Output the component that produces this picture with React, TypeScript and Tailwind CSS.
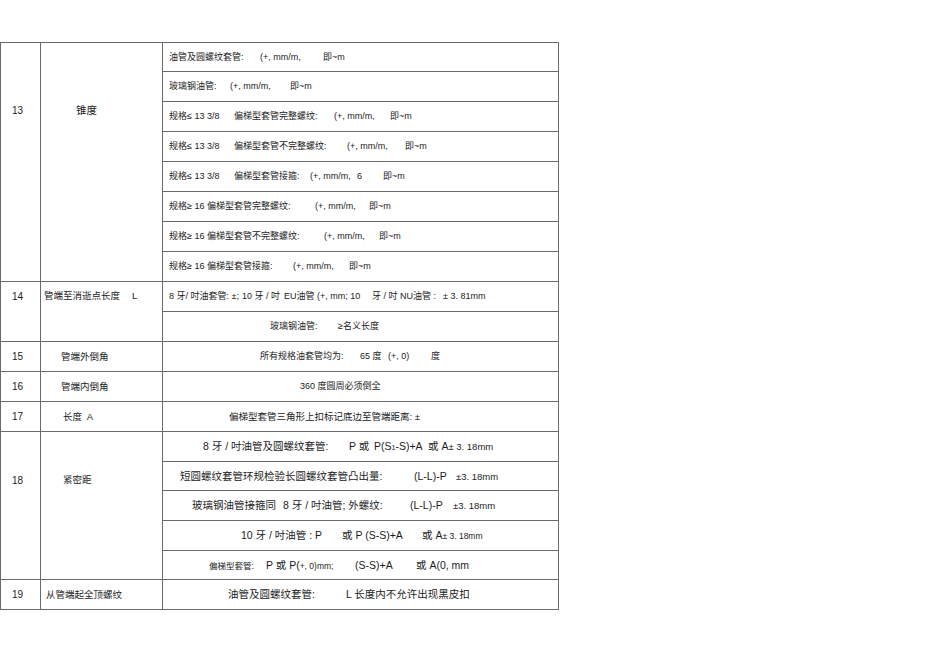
import type { ReactNode } from "react";

type Seg = { t: ReactNode; w?: string };
type Line = { h: string; pl: string; size: string; segs: Seg[] };

const B = "border-[#6a6a6a]";

// 锥度 — eight sub rows
const TAPER: Line[] = [
  {
    h: "h-[29px]",
    pl: "pl-[6px]",
    size: "text-[9px]",
    segs: [
      { t: "油管及圆螺纹套管:", w: "w-[91px]" },
      { t: "(+, mm/m,", w: "w-[63px]" },
      { t: "即~m" },
    ],
  },
  {
    h: "h-[30px]",
    pl: "pl-[6px]",
    size: "text-[9px]",
    segs: [
      { t: "玻璃钢油管:", w: "w-[61px]" },
      { t: "(+, mm/m,", w: "w-[60px]" },
      { t: "即~m" },
    ],
  },
  {
    h: "h-[30px]",
    pl: "pl-[6px]",
    size: "text-[9px]",
    segs: [
      { t: "规格≤ 13 3/8", w: "w-[65px]" },
      { t: "偏梯型套管完整螺纹:", w: "w-[100px]" },
      { t: "(+, mm/m,", w: "w-[56px]" },
      { t: "即~m" },
    ],
  },
  {
    h: "h-[30px]",
    pl: "pl-[6px]",
    size: "text-[9px]",
    segs: [
      { t: "规格≤ 13 3/8", w: "w-[65px]" },
      { t: "偏梯型套管不完整螺纹:", w: "w-[113px]" },
      { t: "(+, mm/m,", w: "w-[58px]" },
      { t: "即~m" },
    ],
  },
  {
    h: "h-[30px]",
    pl: "pl-[6px]",
    size: "text-[9px]",
    segs: [
      { t: "规格≤ 13 3/8", w: "w-[65px]" },
      { t: "偏梯型套管接箍:", w: "w-[76px]" },
      { t: "(+, mm/m,", w: "w-[47px]" },
      { t: "6", w: "w-[26px]" },
      { t: "即~m" },
    ],
  },
  {
    h: "h-[30px]",
    pl: "pl-[6px]",
    size: "text-[9px]",
    segs: [
      { t: "规格≥ 16 偏梯型套管完整螺纹:", w: "w-[146px]" },
      { t: "(+, mm/m,", w: "w-[54px]" },
      { t: "即~m" },
    ],
  },
  {
    h: "h-[30px]",
    pl: "pl-[6px]",
    size: "text-[9px]",
    segs: [
      { t: "规格≥ 16 偏梯型套管不完整螺纹:", w: "w-[155px]" },
      { t: "(+, mm/m,", w: "w-[55px]" },
      { t: "即~m" },
    ],
  },
  {
    h: "h-[30px]",
    pl: "pl-[6px]",
    size: "text-[9px]",
    segs: [
      { t: "规格≥ 16 偏梯型套管接箍:", w: "w-[124px]" },
      { t: "(+, mm/m,", w: "w-[56px]" },
      { t: "即~m" },
    ],
  },
];

const STANDOFF: Line[] = [
  {
    h: "h-[30px]",
    pl: "pl-[40px]",
    size: "text-[10.5px]",
    segs: [
      { t: "8 牙 / 吋油管及圆螺纹套管:", w: "w-[146px]" },
      { t: "P 或", w: "w-[25px]" },
      {
        t: (
          <>
            P(S<span className="text-[7px]">1</span>-S)+A
          </>
        ),
        w: "w-[54px]",
      },
      {
        t: (
          <>
            或 A<span className="text-[9.5px]">± 3. 18mm</span>
          </>
        ),
      },
    ],
  },
  {
    h: "h-[29px]",
    pl: "pl-[17px]",
    size: "text-[10.5px]",
    segs: [
      { t: "短圆螺纹套管环规检验长圆螺纹套管凸出量:", w: "w-[234px]" },
      { t: "(L-L)-P", w: "w-[42px]" },
      { t: <span className="text-[9.5px]">±3. 18mm</span> },
    ],
  },
  {
    h: "h-[30px]",
    pl: "pl-[29px]",
    size: "text-[10.5px]",
    segs: [
      { t: "玻璃钢油管接箍同", w: "w-[91px]" },
      { t: "8 牙 / 吋油管; 外螺纹:", w: "w-[127px]" },
      { t: "(L-L)-P", w: "w-[43px]" },
      { t: <span className="text-[9.5px]">±3. 18mm</span> },
    ],
  },
  {
    h: "h-[30px]",
    pl: "pl-[78px]",
    size: "text-[10.5px]",
    segs: [
      { t: "10 牙 / 吋油管 : P", w: "w-[101px]" },
      { t: "或 P (S-S)+A", w: "w-[80px]" },
      {
        t: (
          <>
            或 A<span className="text-[8.5px]">± 3. 18mm</span>
          </>
        ),
      },
    ],
  },
  {
    h: "h-[29px]",
    pl: "pl-[46px]",
    size: "text-[10.5px]",
    segs: [
      { t: <span className="text-[8.5px]">偏梯型套管:</span>, w: "w-[57px]" },
      {
        t: (
          <>
            P 或 P(<span className="text-[8.5px]">+, 0)mm;</span>
          </>
        ),
        w: "w-[89px]",
      },
      { t: "(S-S)+A", w: "w-[61px]" },
      { t: "或 A(0, mm" },
    ],
  },
];

function Content({ line }: { line: Line }) {
  return (
    <div
      className={`flex items-center whitespace-nowrap border-r border-b ${B} ${line.h} ${line.pl} ${line.size} leading-none`}
    >
      {line.segs.map((s, i) => (
        <span key={i} className={`shrink-0 ${s.w ?? ""}`}>
          {s.t}
        </span>
      ))}
    </div>
  );
}

function NumCell({ n, span, top }: { n: string; span: string; top?: string }) {
  return (
    <div
      className={`flex border-r border-b ${B} ${span} ${top ?? "items-center"} pl-[11px] text-[10px] leading-none`}
    >
      <span className={top ? "pt-[1px]" : ""}>{n}</span>
    </div>
  );
}

function LabelCell({
  children,
  span,
  pl,
  top,
  size = "text-[9.5px]",
}: {
  children: ReactNode;
  span: string;
  pl: string;
  top?: string;
  size?: string;
}) {
  return (
    <div
      className={`flex whitespace-nowrap border-r border-b ${B} ${span} ${top ?? "items-center"} ${pl} ${size} leading-none`}
    >
      <span>{children}</span>
    </div>
  );
}

export default function App() {
  return (
    <div className="h-[672px] w-[950px] bg-white pt-[42px] font-['Liberation_Sans','Noto_Sans_CJK_SC',sans-serif] text-[#1c1c1c]">
      <div className={`grid w-[559px] grid-cols-[40px_122px_396px] border-l border-t ${B}`}>
        {/* 13 锥度 */}
        <NumCell n="13" span="row-span-8" top="items-start pt-[62px]" />
        <LabelCell span="row-span-8" pl="pl-[35px]" top="items-start pt-[62px]" size="text-[10.5px]">
          锥度
        </LabelCell>
        {TAPER.map((l, i) => (
          <Content key={i} line={l} />
        ))}

        {/* 14 */}
        <NumCell n="14" span="row-span-2" top="items-start pt-[9px]" />
        <LabelCell span="row-span-2" pl="pl-[3px]" top="items-start pt-[9px]">
          管端至消逝点长度<span className="ml-[12px]">L</span>
        </LabelCell>
        <Content
          line={{
            h: "h-[30px]",
            pl: "pl-[6px]",
            size: "text-[9px]",
            segs: [
              { t: "8 牙/ 吋油套管: ±;", w: "w-[73px]" },
              { t: "10 牙 / 吋", w: "w-[42px]" },
              { t: "EU油管 (+, mm; 10", w: "w-[88px]" },
              { t: "牙 / 吋 NU油管 :", w: "w-[71px]" },
              { t: "± 3. 81mm" },
            ],
          }}
        />
        <Content
          line={{
            h: "h-[30px]",
            pl: "pl-[107px]",
            size: "text-[9px]",
            segs: [{ t: "玻璃钢油管:", w: "w-[68px]" }, { t: "≥名义长度" }],
          }}
        />

        {/* 15 */}
        <NumCell n="15" span="" />
        <LabelCell span="" pl="pl-[20px]">
          管端外倒角
        </LabelCell>
        <Content
          line={{
            h: "h-[30px]",
            pl: "pl-[97px]",
            size: "text-[9px]",
            segs: [
              { t: "所有规格油套管均为:", w: "w-[100px]" },
              { t: "65 度", w: "w-[28px]" },
              { t: "(+,  0)", w: "w-[43px]" },
              { t: "度" },
            ],
          }}
        />

        {/* 16 */}
        <NumCell n="16" span="" />
        <LabelCell span="" pl="pl-[20px]">
          管端内倒角
        </LabelCell>
        <Content
          line={{
            h: "h-[30px]",
            pl: "pl-[137px]",
            size: "text-[9px]",
            segs: [{ t: "360 度圆周必须倒全" }],
          }}
        />

        {/* 17 */}
        <NumCell n="17" span="" />
        <LabelCell span="" pl="pl-[22px]">
          长度 <span className="ml-[2px]">A</span>
        </LabelCell>
        <Content
          line={{
            h: "h-[30px]",
            pl: "pl-[66px]",
            size: "text-[9.5px]",
            segs: [{ t: "偏梯型套管三角形上扣标记底边至管端距离: ±" }],
          }}
        />

        {/* 18 紧密距 */}
        <NumCell n="18" span="row-span-5" top="items-start pt-[43px]" />
        <LabelCell span="row-span-5" pl="pl-[22px]" top="items-start pt-[43px]">
          紧密距
        </LabelCell>
        {STANDOFF.map((l, i) => (
          <Content key={i} line={l} />
        ))}

        {/* 19 */}
        <NumCell n="19" span="" />
        <LabelCell span="" pl="pl-[5px]">
          从管端起全顶螺纹
        </LabelCell>
        <Content
          line={{
            h: "h-[30px]",
            pl: "pl-[65px]",
            size: "text-[10.5px]",
            segs: [
              { t: "油管及圆螺纹套管:", w: "w-[118px]" },
              { t: "L 长度内不允许出现黑皮扣" },
            ],
          }}
        />
      </div>
    </div>
  );
}
